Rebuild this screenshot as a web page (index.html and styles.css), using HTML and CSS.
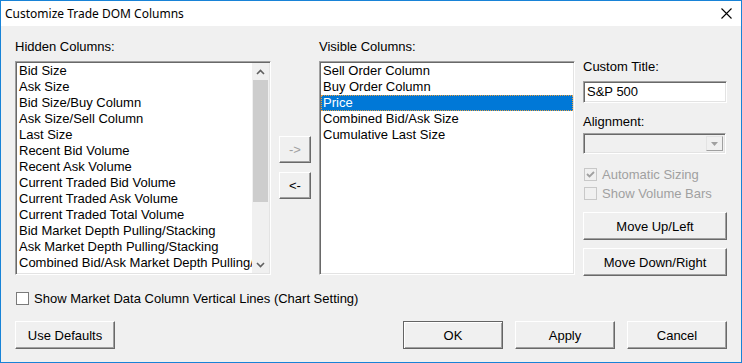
FILE: index.html
```html
<!DOCTYPE html>
<html lang="en">
<head>
  <meta charset="UTF-8" />
  <title>Customize Trade DOM Columns</title>
  <link rel="stylesheet" href="styles.css">
</head>
<body>
  <div class="window">
    <div class="titlebar">
      <span class="title">Customize Trade DOM Columns</span>
      <svg class="close" width="11" height="11" viewBox="0 0 11 11">
        <path d="M0.5 0.5 L10.5 10.5 M10.5 0.5 L0.5 10.5" stroke="#000" stroke-width="1.1" fill="none" />
      </svg>
    </div>

    <div class="content">
      <div class="columns">
        <div class="col col-hidden">
          <div class="label">Hidden Columns:</div>
          <div class="listbox">
            <div class="items">
              <div class="item">Bid Size</div>
              <div class="item">Ask Size</div>
              <div class="item">Bid Size/Buy Column</div>
              <div class="item">Ask Size/Sell Column</div>
              <div class="item">Last Size</div>
              <div class="item">Recent Bid Volume</div>
              <div class="item">Recent Ask Volume</div>
              <div class="item">Current Traded Bid Volume</div>
              <div class="item">Current Traded Ask Volume</div>
              <div class="item">Current Traded Total Volume</div>
              <div class="item">Bid Market Depth Pulling/Stacking</div>
              <div class="item">Ask Market Depth Pulling/Stacking</div>
              <div class="item">Combined Bid/Ask Market Depth Pulling/Stacking</div>
              <div class="item">Bar Size</div>
            </div>
            <div class="scrollbar">
              <div class="sb-btn">
                <svg width="9" height="6" viewBox="0 0 9 6"><path d="M1 5 L4.5 1.5 L8 5" stroke="#606060" stroke-width="1.6" fill="none" /></svg>
              </div>
              <div class="sb-track"><div class="sb-thumb"></div></div>
              <div class="sb-btn">
                <svg width="9" height="6" viewBox="0 0 9 6"><path d="M1 1 L4.5 4.5 L8 1" stroke="#606060" stroke-width="1.6" fill="none" /></svg>
              </div>
            </div>
          </div>
        </div>

        <div class="col col-arrows">
          <button class="btn btn-arrow" disabled>-&gt;</button>
          <button class="btn btn-arrow">&lt;-</button>
        </div>

        <div class="col col-visible">
          <div class="label">Visible Columns:</div>
          <div class="listbox">
            <div class="items">
              <div class="item">Sell Order Column</div>
              <div class="item">Buy Order Column</div>
              <div class="item selected">Price</div>
              <div class="item">Combined Bid/Ask Size</div>
              <div class="item">Cumulative Last Size</div>
            </div>
          </div>
        </div>

        <div class="col col-props">
          <div class="label label-title">Custom Title:</div>
          <div class="textbox">S&amp;P 500</div>
          <div class="label label-align">Alignment:</div>
          <div class="combo">
            <div class="combo-btn">
              <svg width="7" height="4" viewBox="0 0 7 4"><path d="M0 0 H7 L3.5 4 Z" fill="#a0a0a0" /></svg>
            </div>
          </div>
          <div class="check check-auto disabled">
            <span class="box">
              <svg width="11" height="11" viewBox="0 0 11 11"><path d="M2 5 L4.5 7.5 L9 3" stroke="#a0a0a0" stroke-width="1.8" fill="none" /></svg>
            </span>
            <span>Automatic Sizing</span>
          </div>
          <div class="check check-bars disabled">
            <span class="box"></span>
            <span>Show Volume Bars</span>
          </div>
          <button class="btn btn-wide btn-up">Move Up/Left</button>
          <button class="btn btn-wide btn-down">Move Down/Right</button>
        </div>
      </div>

      <div class="check check-lines">
        <span class="box"></span>
        <span>Show Market Data Column Vertical Lines (Chart Setting)</span>
      </div>

      <div class="footer">
        <button class="btn btn-foot">Use Defaults</button>
        <div class="footer-right">
          <button class="btn btn-foot btn-default">OK</button>
          <button class="btn btn-foot">Apply</button>
          <button class="btn btn-foot">Cancel</button>
        </div>
      </div>
    </div>
  </div>
</body>
</html>
```

FILE: styles.css
```css
body {
  margin: 0;
  background: #fff;
  font-family: "Liberation Sans", Arial, sans-serif;
  font-size: 13px;
  color: #000;
}
.window {
  width: 742px;
  height: 363px;
  box-sizing: border-box;
  border: 1px solid #1883d7;
  background: #f0f0f0;
  display: flex;
  flex-direction: column;
}
.titlebar {
  height: 25px;
  flex: none;
  background: #fff;
  display: flex;
  align-items: center;
  justify-content: space-between;
  padding: 0 9px 0 4px;
  font-family: "Noto Sans", "Open Sans", sans-serif;
  font-size: 12px;
}
.content {
  padding: 13px 14px 0 14px;
}
.columns {
  display: flex;
  align-items: flex-start;
}
.label {
  height: 16px;
  line-height: 16px;
  margin-bottom: 6px;
  white-space: nowrap;
}
.col-hidden, .col-visible {
  width: 256px;
}
.col-arrows {
  width: 32px;
  margin-left: 8px;
  padding-top: 97px;
  display: flex;
  flex-direction: column;
  gap: 9px;
}
.col-visible {
  margin-left: 8px;
}
.col-props {
  width: 144px;
  margin-left: 8px;
  display: flex;
  flex-direction: column;
}

/* list boxes */
.listbox {
  height: 214px;
  box-sizing: border-box;
  border: 1px solid;
  border-color: #a0a0a0 #fff #fff #a0a0a0;
  box-shadow: inset 1px 1px 0 #696969, inset -1px -1px 0 #e3e3e3;
  background: #fff;
  display: flex;
  padding: 1px;
  overflow: hidden;
}
.items {
  flex: 1;
  min-width: 0;
  overflow: hidden;
}
.item {
  height: 16px;
  line-height: 16px;
  padding-left: 2px;
  white-space: nowrap;
  overflow: hidden;
}
.item.selected {
  background: #0078d7;
  color: #fff;
  box-sizing: border-box;
  border: 1px dotted #e8a040;
  padding-left: 1px;
  line-height: 14px;
}
.scrollbar {
  width: 17px;
  flex: none;
  display: flex;
  flex-direction: column;
  background: #f0f0f0;
}
.sb-btn {
  height: 17px;
  flex: none;
  display: flex;
  align-items: center;
  justify-content: center;
}
.sb-track {
  flex: 1;
}
.sb-thumb {
  height: 122px;
  margin: 0 1px;
  background: #cdcdcd;
}

/* buttons */
.btn {
  box-sizing: border-box;
  font-family: inherit;
  font-size: 13px;
  color: #000;
  background: #f0f0f0;
  border: 1px solid;
  border-color: #fff #696969 #696969 #fff;
  box-shadow: inset -1px -1px 0 #a0a0a0;
  padding: 0;
  margin: 0;
}
.btn:disabled {
  color: #a0a0a0;
}
.btn-arrow {
  height: 27px;
  width: 32px;
}
.btn-wide {
  width: 144px;
  height: 28px;
}
.btn-up {
  margin-top: 11px;
}
.btn-down {
  margin-top: 8px;
}
.btn-foot {
  width: 100px;
  height: 28px;
}
.btn-default {
  border-color: #646464;
  box-shadow: inset 1px 1px 0 #fff, inset -1px -1px 0 #a0a0a0;
}

/* right column fields */
.label-title {
  margin-top: 20px;
}
.textbox {
  height: 22px;
  box-sizing: border-box;
  border: 1px solid;
  border-color: #a0a0a0 #fff #fff #a0a0a0;
  box-shadow: inset 1px 1px 0 #696969, inset -1px -1px 0 #e3e3e3;
  background: #fff;
  padding: 0 3px;
  line-height: 20px;
}
.label-align {
  margin-top: 11px;
  margin-bottom: 3px;
}
.combo {
  width: 143px;
  height: 21px;
  box-sizing: border-box;
  border: 1px solid;
  border-color: #a0a0a0 #fff #fff #a0a0a0;
  box-shadow: inset 1px 1px 0 #696969, inset -1px -1px 0 #e3e3e3;
  background: #f0f0f0;
  display: flex;
  justify-content: flex-end;
  padding: 2px;
}
.combo-btn {
  width: 17px;
  box-sizing: border-box;
  border: 1px solid;
  border-color: #e3e3e3 #a0a0a0 #a0a0a0 #e3e3e3;
  display: flex;
  align-items: center;
  justify-content: center;
}

/* check boxes */
.check {
  display: flex;
  align-items: center;
  gap: 5px;
  height: 16px;
  white-space: nowrap;
}
.check .box {
  width: 13px;
  height: 13px;
  box-sizing: border-box;
  border: 1px solid #7a7a7a;
  background: #fff;
  display: flex;
  align-items: center;
  justify-content: center;
}
.check.disabled {
  color: #a0a0a0;
}
.check.disabled .box {
  border-color: #c8c8c8;
  background: #f0f0f0;
}
.check-auto {
  margin-top: 12px;
  margin-left: 1px;
}
.check-bars {
  margin-top: 3px;
  margin-left: 1px;
}
.check-lines {
  margin-top: 14px;
  margin-left: 1px;
}

.footer {
  display: flex;
  margin-top: 15px;
}
.footer-right {
  margin-left: auto;
  display: flex;
  gap: 12px;
}
```
